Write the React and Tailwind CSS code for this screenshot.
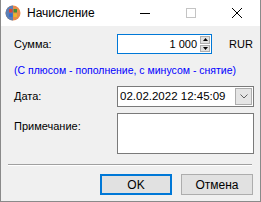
import React from 'react';

const font = { fontFamily: '"Liberation Sans", Arial, sans-serif' };

function AppIcon() {
  return (
    <svg width="16" height="16" viewBox="0 0 16 16">
      <circle cx="8" cy="8" r="7.5" fill="#e98b4a" />
      <path d="M8 0.5 A7.5 7.5 0 0 0 8 15.5 Z" fill="#5b7fb5" />
      <rect x="4" y="4" width="3.5" height="3.5" fill="#d9463a" />
      <rect x="8.5" y="4" width="3.5" height="3.5" fill="#3f8f3a" />
      <rect x="4" y="8.5" width="3.5" height="3.5" fill="#3a6fc9" />
      <rect x="8.5" y="8.5" width="3.5" height="3.5" fill="#e8b82c" />
    </svg>
  );
}

export default function App() {
  return (
    <div className="w-[261px] h-[202px] flex flex-col bg-[#f0f0f0] border-x border-b border-[#8a8a8a] text-[11px] text-black" style={font}>
      {/* title bar */}
      <div className="h-[26px] bg-white flex items-center">
        <div className="pl-[4px] pr-[6px] flex items-center"><AppIcon /></div>
        <span className="text-[12px] flex-1">Начисление</span>
        <div className="w-[46px] h-full flex items-center justify-center">
          <div className="w-[10px] h-px bg-black" />
        </div>
        <div className="w-[46px] h-full flex items-center justify-center">
          <div className="w-[10px] h-[10px] border border-[#c4c4c4]" />
        </div>
        <div className="w-[46px] h-full flex items-center justify-center">
          <svg width="10" height="10" viewBox="0 0 10 10">
            <path d="M0 0 L10 10 M10 0 L0 10" stroke="#000" strokeWidth="1" />
          </svg>
        </div>
      </div>

      {/* body */}
      <div className="flex-1 flex flex-col pl-[12px] pr-[7px] pt-[8px]">
        <div className="flex items-center h-[20px]">
          <span className="w-[104px] shrink-0 pl-px">Сумма:</span>
          <div className="w-[95px] shrink-0 h-[20px] bg-white border border-[#0078d7] flex items-center">
            <span className="flex-1 text-right pr-[3px]">1 000</span>
            <div className="w-[10px] h-[16px] mr-px flex flex-col gap-px">
              <div className="flex-1 bg-[#e1e1e1] border border-[#adadad] flex items-center justify-center">
                <svg width="5" height="3" viewBox="0 0 5 3"><path d="M0 3 L2.5 0 L5 3 Z" fill="#000" /></svg>
              </div>
              <div className="flex-1 bg-[#e1e1e1] border border-[#adadad] flex items-center justify-center">
                <svg width="5" height="3" viewBox="0 0 5 3"><path d="M0 0 L2.5 3 L5 0 Z" fill="#000" /></svg>
              </div>
            </div>
          </div>
          <span className="ml-[17px] shrink-0">RUR</span>
        </div>

        <div className="mt-[10px] text-[#0000ff] leading-[13px] pl-px text-[10.5px] whitespace-nowrap">(С плюсом - пополнение, с минусом - снятие)</div>

        <div className="flex items-center mt-[9px]">
          <span className="w-[104px] shrink-0 pl-px">Дата:</span>
          <div className="w-[137px] shrink-0 h-[21px] bg-white border border-[#7a7a7a] flex items-center">
            <span className="flex-1 pl-[2px] text-[11.5px]">02.02.2022 12:45:09</span>
            <div className="w-[17px] h-[17px] mr-px bg-[#e5e5e5] border border-[#adadad] flex items-center justify-center">
              <svg width="8" height="5" viewBox="0 0 8 5"><path d="M0.5 0.5 L4 4 L7.5 0.5" stroke="#606060" fill="none" /></svg>
            </div>
          </div>
        </div>

        <div className="flex mt-[6px]">
          <span className="w-[104px] shrink-0 pl-px pt-[5px]">Примечание:</span>
          <div className="w-[137px] shrink-0 h-[41px] bg-white border border-[#7a7a7a]" />
        </div>

        <div className="mt-[10px] -ml-[5px] mr-px border-t border-[#a0a0a0] border-b border-b-white" />

        <div className="flex justify-end gap-[9px] mt-[8px]">
          <button className="w-[72px] h-[21px] bg-[#e1e1e1] border-2 border-[#0078d7] text-[12px]">OK</button>
          <button className="w-[72px] h-[21px] bg-[#e1e1e1] border border-[#adadad] text-[12px]">Отмена</button>
        </div>
      </div>
    </div>
  );
}
